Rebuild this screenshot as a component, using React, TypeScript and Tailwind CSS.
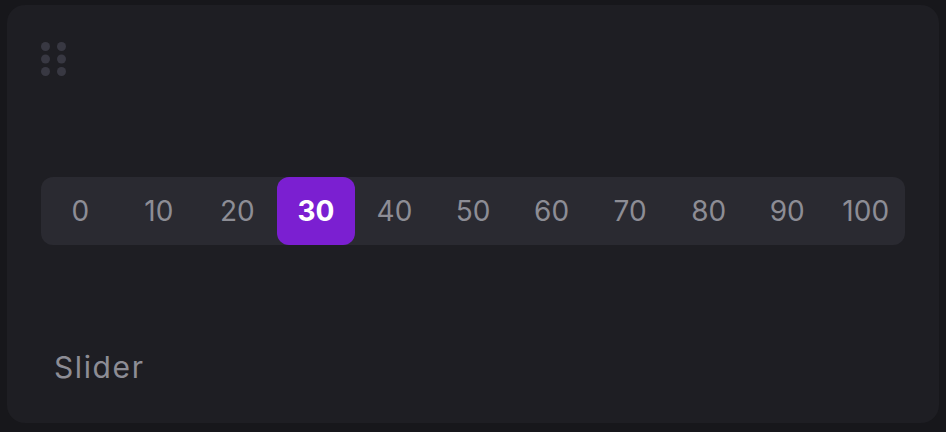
import { useState } from "react";

const steps = [0, 10, 20, 30, 40, 50, 60, 70, 80, 90, 100];

function GripIcon() {
  return (
    <svg width="26" height="36" viewBox="0 0 26 36" className="block">
      {[0, 1, 2].map((r) =>
        [0, 1].map((c) => (
          <circle key={`${r}-${c}`} cx={4.5 + c * 16} cy={4.5 + r * 12.5} r="4.5" fill="#383842" />
        ))
      )}
    </svg>
  );
}

export default function App() {
  const [value, setValue] = useState(30);

  return (
    <div className="h-[432px] w-full bg-[#17171b] px-[7px] pt-[5px] pb-[9px]" style={{ fontFamily: "Inter, 'Noto Sans', sans-serif" }}>
      <div className="flex h-full flex-col rounded-[18px] bg-[#1e1e23] px-[34px] pt-[37px]">
        <GripIcon />

        <div className="mt-[99px] grid h-[68px] grid-cols-11 rounded-[12px] bg-[#2a2a31]">
          {steps.map((s) => (
            <button
              key={s}
              onClick={() => setValue(s)}
              className={
                s === value
                  ? "flex items-center justify-center rounded-[12px] bg-[#7b1fd1] text-[28px] font-bold text-white"
                  : "flex items-center justify-center text-[28px] text-[#8d8d95]"
              }
            >
              {s}
            </button>
          ))}
        </div>

        <div className="mt-[104px] pl-[13px] text-[30px] leading-[36px] tracking-[1.6px] text-[#8d8d95]">Slider</div>
      </div>
    </div>
  );
}
